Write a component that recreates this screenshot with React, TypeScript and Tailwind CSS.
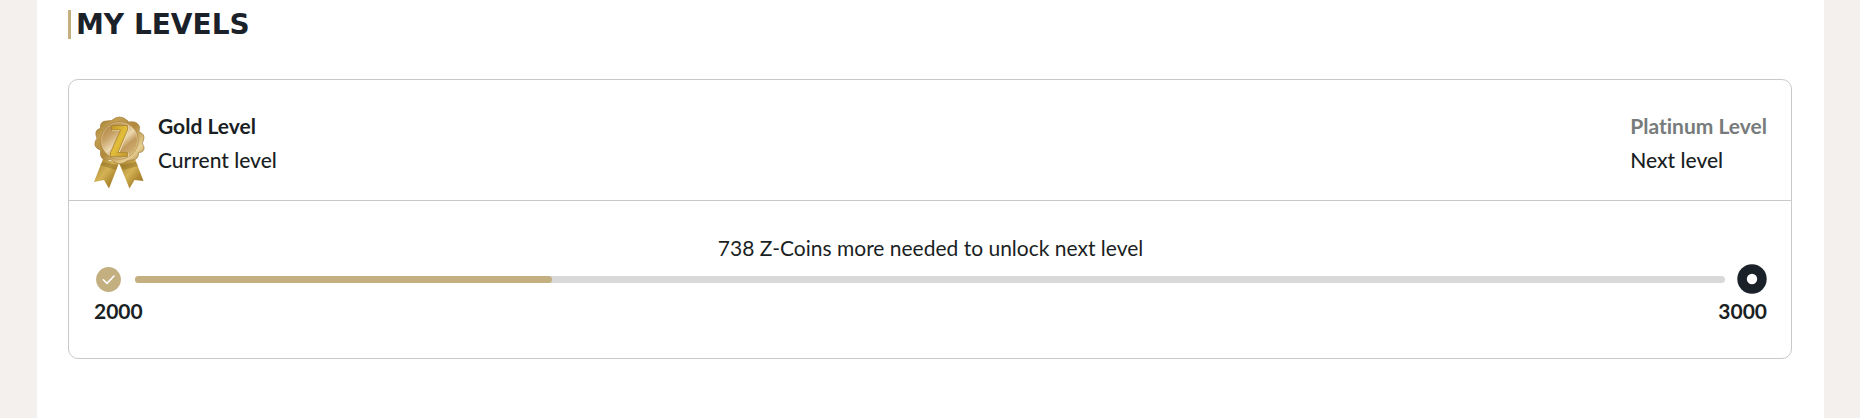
const MIN_COINS = 2000;
const MAX_COINS = 3000;
const COINS_NEEDED = 738;

function GoldMedal() {
  return (
    <svg viewBox="0 0 52 73" className="h-[73px] w-13 shrink-0" role="img" aria-label="Gold medal">
      <defs>
        <linearGradient id="rim" x1="0" y1="0" x2="1" y2="1">
          <stop offset="0" stopColor="#94702a" />
          <stop offset="0.25" stopColor="#c39f52" />
          <stop offset="0.5" stopColor="#b0883c" />
          <stop offset="0.78" stopColor="#e8d093" />
          <stop offset="1" stopColor="#94702a" />
        </linearGradient>
        <linearGradient id="disc" x1="0.1" y1="0" x2="0.9" y2="1">
          <stop offset="0" stopColor="#a97f3a" />
          <stop offset="0.3" stopColor="#c8a367" />
          <stop offset="0.52" stopColor="#ecd8b0" />
          <stop offset="0.68" stopColor="#c19a5c" />
          <stop offset="1" stopColor="#dcc083" />
        </linearGradient>
        <linearGradient id="zed" x1="0" y1="0" x2="1" y2="1">
          <stop offset="0" stopColor="#c0942a" />
          <stop offset="0.5" stopColor="#e2be3a" />
          <stop offset="1" stopColor="#c1932a" />
        </linearGradient>
        <linearGradient id="ribbon" x1="0" y1="0" x2="1" y2="1">
          <stop offset="0" stopColor="#9c7626" />
          <stop offset="0.45" stopColor="#d4b355" />
          <stop offset="0.7" stopColor="#b18a33" />
          <stop offset="1" stopColor="#967023" />
        </linearGradient>
      </defs>
      <path d="M9 43 L25 47 L15 72.500 L10 64 L0 66 Z" fill="url(#ribbon)" />
      <path d="M25 47 L41 43 L49.500 65 L40.500 64 L35.500 72.500 Z" fill="url(#ribbon)" />
      <path d="M9 46 L24 49 L22 54 L6 49 Z M27 49 L42 46 L44 50 L29 54 Z" fill="#8a681f" opacity="0.45" />
      <path
        d="M17.500 4.500 Q25.500 -2.500 33.500 4.500 L34.500 6 Q43 4.500 45.500 10.500 L45 16 Q51.500 18 49.500 24 Q47 27 50 31 Q50.500 36.500 44.500 36.500 Q45 44 37.500 44 L33.500 44.500 Q26 51 18.500 45 L16.500 43.500 Q8 45.500 6.500 39 L6.500 34 Q-1 31.500 1.500 25 Q4 22.500 2 19 Q1 13.500 6.500 12.500 Q5.500 5 12.500 5 Z"
        fill="url(#rim)"
        stroke="#a07b35"
        strokeWidth="0.7"
        strokeLinejoin="round"
      />
      <circle cx="25.500" cy="24.500" r="18.700" fill="url(#disc)" stroke="#a98243" strokeWidth="0.6" />
      <circle cx="25.500" cy="24.500" r="17.900" fill="none" stroke="#e6cf97" strokeWidth="0.8" opacity="0.7" />
      <path d="M18 10 H34.500 V14.500 L25.500 36.500 H34.500 V41 H17.500 V36.500 L27 15 H18 Z" fill="#f3e6bd" />
      <path d="M17.500 9.500 H33.500 V14 L24 36.500 H33.500 V40.500 H16.500 V36.500 L26.500 14 H17.500 Z" fill="url(#zed)" stroke="#9f7a2c" strokeWidth="0.7" />
    </svg>
  );
}

function CheckBadge() {
  return (
    <svg viewBox="0 0 25 25" className="size-[25px] shrink-0" aria-hidden="true">
      <circle cx="12.500" cy="12.500" r="12.400" fill="#c3af80" />
      <path d="M7.300 12.800 L11 16.400 L18 9" fill="none" stroke="#fff" strokeWidth="1.600" strokeLinecap="round" strokeLinejoin="round" />
    </svg>
  );
}

function TargetBadge() {
  return (
    <svg viewBox="0 0 30 30" className="size-[30px] shrink-0" aria-hidden="true">
      <circle cx="15" cy="15" r="14.700" fill="#1a2129" />
      <circle cx="15" cy="15" r="5.200" fill="#fff" />
    </svg>
  );
}

function Level({ name, caption, muted = false }: { name: string; caption: string; muted?: boolean }) {
  return (
    <div className="-mt-[7px] leading-[34px]">
      <p className={muted ? "font-bold text-[#777b7b]" : "font-bold"}>{name}</p>
      <p className="font-medium">{caption}</p>
    </div>
  );
}

export default function App() {
  const percent = ((MAX_COINS - COINS_NEEDED - MIN_COINS) / (MAX_COINS - MIN_COINS)) * 100;

  return (
    <div className="min-h-screen bg-[#f4f0ed] pr-9 pl-[37px] font-['Lato','Open_Sans',sans-serif] text-[21px] text-[#1a1f24] [font-variant-ligatures:none]">
      <main className="min-h-screen bg-white pt-[10px] pr-8 pl-[31px]">
        <h1 className="border-l-3 border-[#c3af80] pl-[5px] font-['DejaVu_Sans',sans-serif] text-[28px] leading-[29px] font-bold text-[#1a2129]">
          MY LEVELS
        </h1>

        <section className="mt-10 rounded-[10px] border border-[#c9c9c9]">
          <div className="flex items-start justify-between border-b border-[#c9c9c9] pt-9 pr-6 pb-[11px] pl-[25px]">
            <div className="flex gap-3">
              <GoldMedal />
              <Level name="Gold Level" caption="Current level" />
            </div>
            <Level name="Platinum Level" caption="Next level" muted />
          </div>

          <div className="pt-[31px] pr-6 pb-[30px] pl-[25px]">
            <p className="text-center leading-8">{COINS_NEEDED} Z-Coins more needed to unlock next level</p>
            <div className="flex items-center pl-0.5">
              <CheckBadge />
              <div
                role="progressbar"
                aria-label="Progress to next level"
                aria-valuemin={MIN_COINS}
                aria-valuemax={MAX_COINS}
                aria-valuenow={MAX_COINS - COINS_NEEDED}
                className="mr-3 ml-3.5 h-[7px] flex-1 overflow-hidden rounded-full bg-[#d9d9d9]"
              >
                <div className="h-full rounded-r-sm bg-[#c3af80]" style={{ width: `${percent}%` }} />
              </div>
              <TargetBadge />
            </div>
            <div className="flex justify-between leading-[34px] font-bold">
              <span>{MIN_COINS}</span>
              <span>{MAX_COINS}</span>
            </div>
          </div>
        </section>
      </main>
    </div>
  );
}
